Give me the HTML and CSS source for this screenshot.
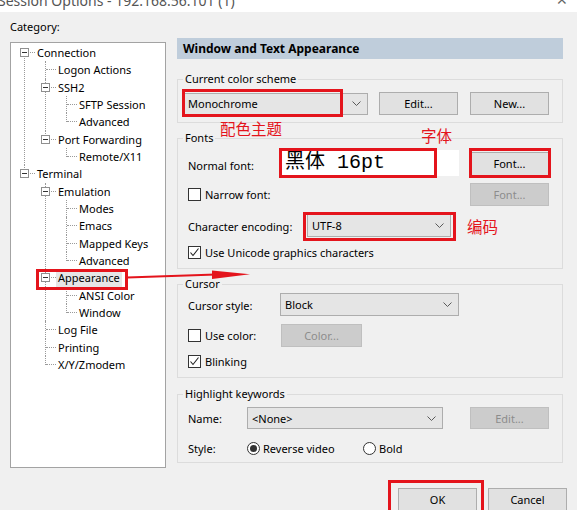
FILE: index.html
```html
<!DOCTYPE html>
<html lang="en">
<head>
<meta charset="utf-8">
<title>Session Options</title>
<link rel="stylesheet" href="styles.css">
</head>
<body>
<div class="titlebar">
  <span class="title">Session Options - 192.168.56.101 (1)</span>
  <span class="close">✕</span>
</div>

<div class="dialog">
  <div class="left">
    <div class="cat">Category:</div>
    <div class="treebox">
      <ul class="tree">
        <li><span class="exp"></span><span class="lbl">Connection</span>
          <ul>
            <li><span class="lbl">Logon Actions</span></li>
            <li><span class="exp"></span><span class="lbl">SSH2</span>
              <ul>
                <li><span class="lbl">SFTP Session</span></li>
                <li><span class="lbl">Advanced</span></li>
              </ul>
            </li>
            <li><span class="exp"></span><span class="lbl">Port Forwarding</span>
              <ul>
                <li><span class="lbl">Remote/X11</span></li>
              </ul>
            </li>
          </ul>
        </li>
        <li><span class="exp"></span><span class="lbl">Terminal</span>
          <ul>
            <li><span class="exp"></span><span class="lbl">Emulation</span>
              <ul>
                <li><span class="lbl">Modes</span></li>
                <li><span class="lbl">Emacs</span></li>
                <li><span class="lbl">Mapped Keys</span></li>
                <li><span class="lbl">Advanced</span></li>
              </ul>
            </li>
            <li><span class="exp"></span><span class="lbl sel">Appearance</span>
              <ul>
                <li><span class="lbl">ANSI Color</span></li>
                <li><span class="lbl">Window</span></li>
              </ul>
            </li>
            <li><span class="lbl">Log File</span></li>
            <li><span class="lbl">Printing</span></li>
            <li><span class="lbl">X/Y/Zmodem</span></li>
          </ul>
        </li>
      </ul>
    </div>
  </div>

  <div class="right">
    <div class="header">Window and Text Appearance</div>

    <fieldset class="group g-scheme">
      <legend>Current color scheme</legend>
      <div class="row scheme-row">
        <div class="combo w-scheme"><span>Monochrome</span><svg class="chev" width="9" height="5" viewBox="0 0 9 5"><polyline points="0.5,0.5 4.5,4.5 8.5,0.5" fill="none" stroke="#5a5a5a" stroke-width="1"/></svg></div>
        <button class="btn w-edit">Edit...</button>
        <button class="btn w-new">New...</button>
      </div>
    </fieldset>

    <fieldset class="group g-fonts">
      <legend>Fonts</legend>
      <div class="row r-normal">
        <span class="label w-normal">Normal font:</span>
        <div class="fontfield">黑体 16pt</div>
        <button class="btn push">Font...</button>
      </div>
      <div class="row r-narrow">
        <span class="cb"></span><span class="label">Narrow font:</span>
        <button class="btn disabled push">Font...</button>
      </div>
      <div class="row r-enc">
        <span class="label w-enc">Character encoding:</span>
        <div class="combo w-enc-combo"><span>UTF-8</span><svg class="chev" width="9" height="5" viewBox="0 0 9 5"><polyline points="0.5,0.5 4.5,4.5 8.5,0.5" fill="none" stroke="#5a5a5a" stroke-width="1"/></svg></div>
      </div>
      <div class="row r-uni">
        <span class="cb checked"><svg width="11" height="11" viewBox="0 0 11 11"><polyline points="1.5,5.5 4,8.5 9.5,1.5" fill="none" stroke="#222" stroke-width="1.1"/></svg></span><span class="label">Use Unicode graphics characters</span>
      </div>
    </fieldset>

    <fieldset class="group g-cursor">
      <legend>Cursor</legend>
      <div class="row r-style">
        <span class="label w-normal">Cursor style:</span>
        <div class="combo w-cursor"><span>Block</span><svg class="chev" width="9" height="5" viewBox="0 0 9 5"><polyline points="0.5,0.5 4.5,4.5 8.5,0.5" fill="none" stroke="#5a5a5a" stroke-width="1"/></svg></div>
      </div>
      <div class="row r-color">
        <span class="cb"></span><span class="label w-usecolor">Use color:</span>
        <button class="btn disabled w-color">Color...</button>
      </div>
      <div class="row r-blink">
        <span class="cb checked"><svg width="11" height="11" viewBox="0 0 11 11"><polyline points="1.5,5.5 4,8.5 9.5,1.5" fill="none" stroke="#222" stroke-width="1.1"/></svg></span><span class="label">Blinking</span>
      </div>
    </fieldset>

    <fieldset class="group g-high">
      <legend>Highlight keywords</legend>
      <div class="row r-name">
        <span class="label w-name">Name:</span>
        <div class="combo w-hl"><span>&lt;None&gt;</span><svg class="chev" width="9" height="5" viewBox="0 0 9 5"><polyline points="0.5,0.5 4.5,4.5 8.5,0.5" fill="none" stroke="#5a5a5a" stroke-width="1"/></svg></div>
        <button class="btn disabled push">Edit...</button>
      </div>
      <div class="row r-hstyle">
        <span class="label w-name">Style:</span>
        <span class="radio on"></span><span class="label w-rev">Reverse video</span>
        <span class="radio"></span><span class="label">Bold</span>
      </div>
    </fieldset>
  </div>
</div>

<div class="footer">
  <button class="btn">OK</button>
  <button class="btn">Cancel</button>
</div>

<div class="marks">
  <div class="redbox m-app"></div>
  <div class="redbox m-scheme"></div>
  <div class="redbox m-field"></div>
  <div class="redbox m-fontbtn"></div>
  <div class="redbox m-enc"></div>
  <div class="redbox m-ok"></div>
  <span class="note n-scheme">配色主题</span>
  <span class="note n-font">字体</span>
  <span class="note n-enc">编码</span>
  <svg class="arrow" width="577" height="510" viewBox="0 0 577 510">
    <line x1="127" y1="277.5" x2="216" y2="274.5" stroke="#e4141c" stroke-width="2.2"/>
    <polygon points="212,270.5 250,274.3 212,279" fill="#e4141c"/>
  </svg>
</div>
</body>
</html>
```

FILE: styles.css
```css
* { box-sizing: border-box; }

html, body {
  margin: 0;
  padding: 0;
}

body {
  width: 577px;
  height: 510px;
  overflow: hidden;
  position: relative;
  background: #f0f0f0;
  font-family: "Noto Sans", "Open Sans", sans-serif;
  font-size: 11px;
  color: #000;
}

/* ---------- generic controls ---------- */
.btn {
  font: inherit;
  color: #000;
  width: 79px;
  height: 23px;
  padding: 0;
  margin: 0;
  background: #e1e1e1;
  border: 1px solid #adadad;
  border-radius: 0;
  flex: none;
}
.btn.disabled {
  background: #cccccc;
  border-color: #bfbfbf;
  color: #8c8c8c;
}
.combo {
  height: 22px;
  background: #e5e5e5;
  border: 1px solid #adadad;
  display: flex;
  align-items: center;
  justify-content: space-between;
  padding: 0 6px 0 4px;
  flex: none;
}
.chev { display: block; }

.cb {
  width: 13px;
  height: 13px;
  flex: none;
  border: 1px solid #333;
  background: #fff;
  margin-right: 4px;
  display: flex;
  align-items: center;
  justify-content: center;
}
.radio {
  width: 13px;
  height: 13px;
  flex: none;
  border: 1px solid #333;
  border-radius: 50%;
  background: #fff;
  margin-right: 3px;
  position: relative;
}
.radio.on::after {
  content: "";
  position: absolute;
  left: 2px;
  top: 2px;
  width: 7px;
  height: 7px;
  border-radius: 50%;
  background: #333;
}

/* ---------- title bar (cut off at the top) ---------- */
.titlebar {
  height: 12px;
  background: #fff;
  overflow: hidden;
  display: flex;
  justify-content: space-between;
  align-items: flex-end;
  padding: 0 9px 0 0;
}
.title {
  font-size: 14px;
  line-height: 20px;
  margin: 0 0 1px -2px;
  color: #555;
  white-space: nowrap;
}
.close {
  font-size: 14px;
  line-height: 20px;
  margin-bottom: 2px;
  color: #666;
}

/* ---------- main layout ---------- */
.dialog {
  display: flex;
  gap: 11px;
  padding: 0 14px 0 10px;
}
.left {
  width: 156px;
  padding-top: 7px;
}
.cat {
  height: 16px;
  line-height: 16px;
}
.treebox {
  margin-top: 7px;
  height: 426px;
  background: #fff;
  border: 1px solid #a3a3a3;
  overflow: hidden;
}
.right {
  width: 386px;
  padding-top: 26px;
}

/* ---------- tree ---------- */
.tree, .tree ul {
  list-style: none;
  margin: 0;
  padding: 0;
}
.tree { padding-top: 1px; }
.tree ul { margin-left: -5px; }
.tree li {
  position: relative;
  padding-left: 26px;
}
.tree li::before {
  content: "";
  position: absolute;
  left: 13px;
  top: 0;
  bottom: 0;
  border-left: 1px dotted #9a9a9a;
}
.tree li:last-child::before {
  bottom: auto;
  height: 9px;
}
.tree > li:first-child::before {
  top: 9px;
  bottom: 0;
  height: auto;
}
.tree li::after {
  content: "";
  position: absolute;
  left: 14px;
  top: 8px;
  width: 10px;
  border-top: 1px dotted #9a9a9a;
}
.tree .lbl {
  display: block;
  height: 17.33px;
  line-height: 17.33px;
  white-space: nowrap;
}
.tree .lbl.sel {
  display: inline-block;
  vertical-align: top;
  background: #e6e6e6;
  margin-left: -2px;
  padding: 0 2px;
}
.tree .exp {
  position: absolute;
  z-index: 1;
  left: 9px;
  top: 4px;
  width: 9px;
  height: 9px;
  border: 1px solid #8f8f8f;
  background: #fff;
}
.tree .exp::after {
  content: "";
  position: absolute;
  left: 1px;
  top: 3px;
  width: 5px;
  height: 1px;
  background: #333;
}

/* ---------- right panel ---------- */
.header {
  height: 21px;
  line-height: 21px;
  padding-left: 6px;
  background: #bfcddb;
  font-weight: bold;
  font-size: 12px;
}

.group {
  margin: 0;
  min-width: 0;
  border: 1px solid #dcdcdc;
  padding: 0 13px 7px 10px;
}
.group legend {
  padding: 0 2px;
  margin-left: -5px;
  height: 14px;
  line-height: 14px;
}
.g-scheme { margin-top: 13px; padding-top: 6px; padding-bottom: 7px; }
.g-fonts { margin-top: 8px; padding-top: 3px; padding-bottom: 9px; }
.g-cursor { margin-top: 8px; padding-top: 2px; padding-bottom: 9px; }
.g-high { margin-top: 9px; padding-top: 6px; padding-bottom: 7px; }

.row {
  display: flex;
  align-items: center;
}
.label { white-space: nowrap; }
.row .push { margin-left: auto; }

.scheme-row { margin-left: -5px; height: 23px; }
.row .w-scheme { width: 185px; }
.row .w-edit { margin-left: 11px; }
.row .w-new { margin-left: 12px; }

.r-normal { height: 29px; }
.w-normal { width: 92px; padding-top: 5px; }
.fontfield {
  width: 179px;
  height: 26px;
  background: #fff;
  padding-left: 5px;
  font-family: "Liberation Mono", "Noto Sans CJK SC", monospace;
  font-size: 20px;
  line-height: 26px;
  white-space: nowrap;
  flex: none;
}
.r-normal .btn { margin-top: 2px; height: 24px; }

.r-narrow { margin-top: 6px; height: 23px; }
.r-narrow .btn { height: 23px; }

.r-enc { margin-top: 7px; height: 24px; }
.w-enc { width: 119px; padding-top: 3px; }
.row .w-enc-combo { width: 144px; height: 24px; }

.r-uni { margin-top: 8px; height: 14px; }

.r-style { height: 23px; }
.row .w-cursor { width: 179px; height: 23px; }
.r-style .label { padding-top: 2px; }

.r-color { margin-top: 8px; height: 23px; }
.w-usecolor { width: 76px; }
.row .w-color { width: 81px; height: 23px; }

.r-blink { margin-top: 7px; height: 14px; }

.r-name { height: 22px; }
.w-name { width: 59px; }
.row .w-hl { width: 196px; height: 22px; }
.r-name .btn { height: 22px; }

.r-hstyle { margin-top: 12px; height: 14px; }
.w-rev { width: 100px; }

/* ---------- footer ---------- */
.footer {
  display: flex;
  justify-content: flex-end;
  gap: 11px;
  margin-top: 20px;
  padding-right: 10px;
}

/* ---------- red annotations (overlay) ---------- */
.marks {
  position: absolute;
  left: 0;
  top: 0;
  width: 577px;
  height: 510px;
  pointer-events: none;
}
.redbox {
  position: absolute;
  border: 3px solid #e4141c;
}
.m-app { left: 36px; top: 269px; width: 92px; height: 21px; }
.m-scheme { left: 182px; top: 89px; width: 161px; height: 28px; }
.m-field { left: 279px; top: 148px; width: 158px; height: 30px; }
.m-fontbtn { left: 469px; top: 148px; width: 82px; height: 30px; }
.m-enc { left: 303px; top: 212px; width: 153px; height: 29px; }
.m-ok { left: 388px; top: 480px; width: 96px; height: 34px; }

.note {
  position: absolute;
  color: #e4141c;
  font-family: "Noto Sans CJK SC", sans-serif;
  font-size: 15.5px;
  line-height: 18px;
  white-space: nowrap;
}
.n-scheme { left: 220px; top: 119px; }
.n-font { left: 421px; top: 126px; }
.n-enc { left: 467px; top: 217px; }

.arrow {
  position: absolute;
  left: 0;
  top: 0;
}
```
